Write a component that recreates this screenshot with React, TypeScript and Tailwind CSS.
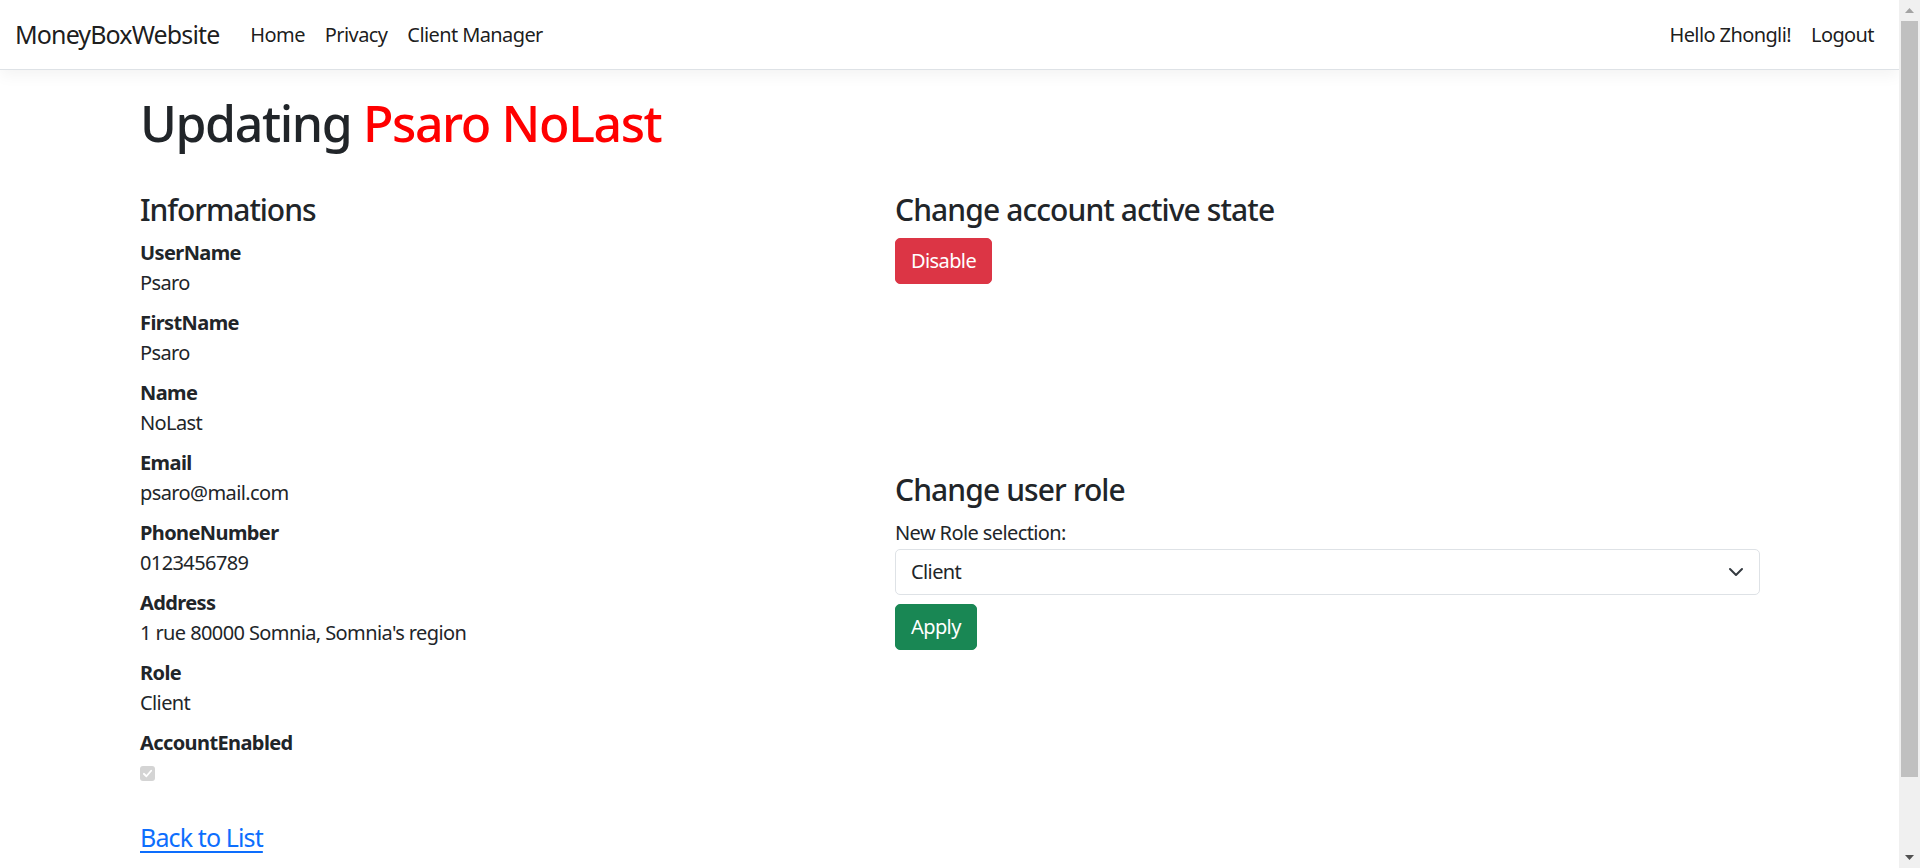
const fields: [string, string][] = [
  ['UserName', 'Psaro'],
  ['FirstName', 'Psaro'],
  ['Name', 'NoLast'],
  ['Email', 'psaro@mail.com'],
  ['PhoneNumber', '0123456789'],
  ['Address', "1 rue 80000 Somnia, Somnia's region"],
  ['Role', 'Client'],
];

function NavLink({ children }: { children: React.ReactNode }) {
  return <a className="px-[10px] text-[20px] leading-[30px] text-[rgba(0,0,0,0.9)]">{children}</a>;
}

function DisabledCheck() {
  return (
    <span className="flex h-[15px] w-[15px] items-center justify-center rounded-[3px] bg-[#d4d4d4]">
      <svg width="11" height="11" viewBox="0 0 12 12" fill="none">
        <path d="M2 6.3 4.8 9 10 3" stroke="#fff" strokeWidth="2" strokeLinecap="round" strokeLinejoin="round" />
      </svg>
    </span>
  );
}

/** Window scrollbar as seen in the capture (page is a bit taller than the viewport). */
function Scrollbar() {
  return (
    <div className="flex w-[21px] shrink-0 flex-col bg-[#f0f0f0]">
      <div className="flex h-[21px] items-center justify-center">
        <svg width="9" height="5" viewBox="0 0 9 5">
          <polygon points="0,5 4.5,0 9,5" fill="#a3a3a3" />
        </svg>
      </div>
      <div className="mx-[2px] h-[756px] bg-[#c0c0c0]" />
      <div className="flex-1" />
      <div className="flex h-[21px] items-center justify-center">
        <svg width="9" height="5" viewBox="0 0 9 5">
          <polygon points="0,0 4.5,5 9,0" fill="#505050" />
        </svg>
      </div>
    </div>
  );
}

export default function App() {
  return (
    <div className="flex h-screen overflow-hidden bg-white">
      <div className="min-w-0 flex-1 font-['Noto_Sans',sans-serif] text-[20px] leading-[1.5] tracking-[-0.03em] text-[#212529]">
        {/* Top navbar */}
        <header className="flex h-[70px] items-center justify-between border-b border-[#dee2e6] bg-white px-[15px] shadow-[0_5px_15px_rgba(0,0,0,0.05)]">
          <div className="flex items-center">
            <a className="mr-[21px] text-[25px] leading-[37px] tracking-[-0.035em] text-[rgba(0,0,0,0.9)]">MoneyBoxWebsite</a>
            <nav className="flex">
              <NavLink>Home</NavLink>
              <NavLink>Privacy</NavLink>
              <NavLink>Client Manager</NavLink>
            </nav>
          </div>
          <nav className="flex">
            <NavLink>Hello Zhongli!</NavLink>
            <NavLink>Logout</NavLink>
          </nav>
        </header>

        <main className="ml-[140px] w-[1620px] pb-[20px]">
          <h1 className="mt-[23px] mb-[10px] text-[50px] leading-[1.2] font-medium tracking-[-0.028em]">
            Updating <span className="text-[#ff0000]">Psaro NoLast</span>
          </h1>

          <div className="mt-[39px] grid grid-cols-[755px_865px]">
            <section>
              <h4 className="mb-[10px] text-[30px] leading-[1.2] font-medium tracking-[-0.035em]">Informations</h4>
              <dl>
                {fields.map(([label, value]) => (
                  <div key={label}>
                    <dt className="font-bold leading-[30px]">{label}</dt>
                    <dd className="mb-[10px] leading-[30px]">{value}</dd>
                  </div>
                ))}
                <dt className="font-bold leading-[30px]">AccountEnabled</dt>
                <dd className="mb-[10px] flex h-[30px] items-center">
                  <DisabledCheck />
                </dd>
              </dl>
              <a className="mt-[34px] block text-[25px] leading-[30px] tracking-[-0.035em] text-[#0d6efd] underline underline-offset-[4px]">
                Back to List
              </a>
            </section>

            <section>
              <h4 className="mb-[10px] text-[30px] leading-[1.2] font-medium tracking-[-0.03em]">
                Change account active state
              </h4>
              <button className="h-[46px] rounded-[5px] border border-[#dc3545] bg-[#dc3545] px-[15px] text-[20px] text-white">
                Disable
              </button>

              <h4 className="mt-[188px] mb-[10px] text-[30px] leading-[1.2] font-medium tracking-[-0.03em]">
                Change user role
              </h4>
              <label className="block leading-[30px]">New Role selection:</label>
              <div className="mt-[1px] flex h-[46px] items-center justify-between rounded-[5px] border border-[#dee2e6] pr-[15px] pl-[15px]">
                <span>Client</span>
                <svg width="16" height="16" viewBox="0 0 16 16" fill="none">
                  <path d="m2 5 6 6 6-6" stroke="#343a40" strokeWidth="2" strokeLinecap="round" strokeLinejoin="round" />
                </svg>
              </div>
              <button className="mt-[9px] h-[46px] rounded-[5px] border border-[#198754] bg-[#198754] px-[15px] text-[20px] text-white">
                Apply
              </button>
            </section>
          </div>
        </main>
      </div>
      <Scrollbar />
    </div>
  );
}
